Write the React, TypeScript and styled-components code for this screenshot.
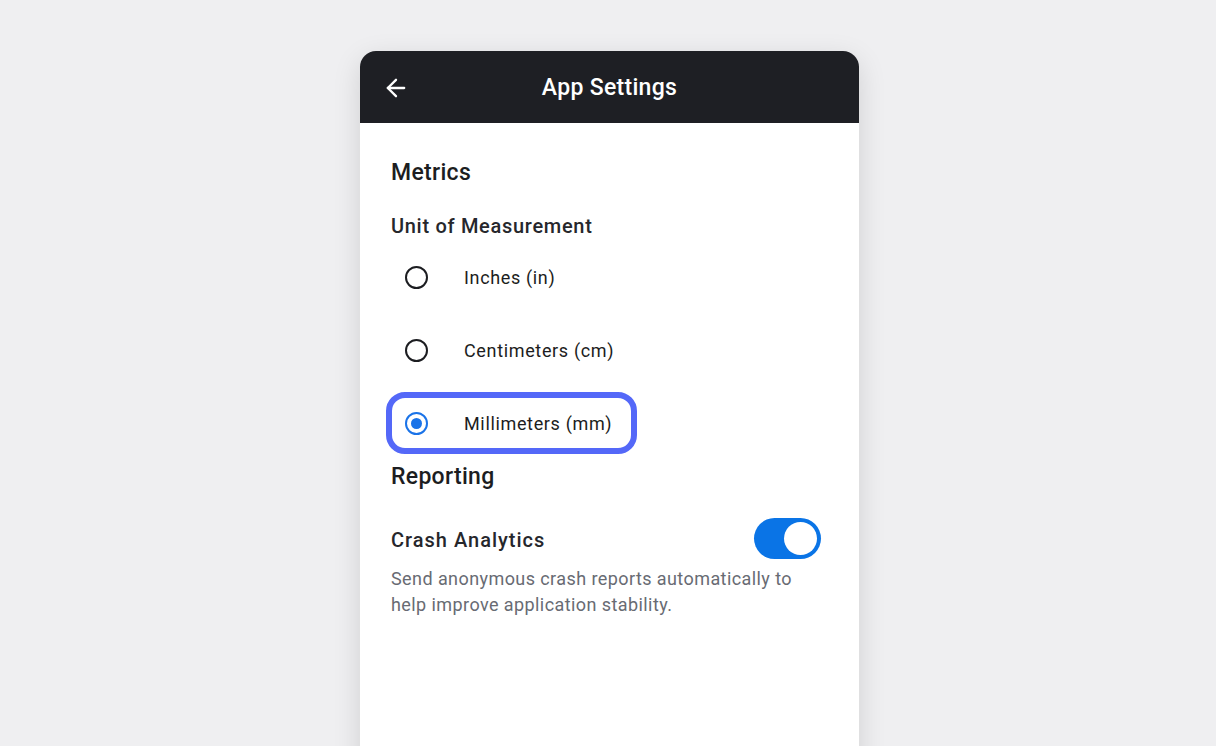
import { useState } from "react"
import styled, { createGlobalStyle } from "styled-components"

const GlobalStyle = createGlobalStyle`
    html, body {
        margin : 0;
        padding : 0;
        background : #efeff1;
        font-family : Roboto, "Noto Sans", "Liberation Sans", sans-serif;
        color : #1c1d21;
    }
`

const units = [
    { id : 'in', label : 'Inches (in)' },
    { id : 'cm', label : 'Centimeters (cm)' },
    { id : 'mm', label : 'Millimeters (mm)' },
]

export default function App(){
    const [unit, setUnit] = useState('mm')
    const [crash, setCrash] = useState(true)
    return(
        <Page>
            <GlobalStyle />
            <Card>
                <Header>
                    <BackButton aria-label="Back">
                        <svg width="28" height="28" viewBox="0 0 24 24" fill="none" stroke="currentColor" strokeWidth="2" strokeLinecap="round" strokeLinejoin="round">
                            <path d="M19 12H5" />
                            <path d="M12 19l-7-7 7-7" />
                        </svg>
                    </BackButton>
                    <Title>App Settings</Title>
                </Header>
                <Content>
                    <SectionTitle>Metrics</SectionTitle>
                    <Label>Unit of Measurement</Label>
                    <RadioList>
                        {
                            units.map(u => (
                                <RadioRow key={u.id} $focused={u.id === 'mm'} onClick={()=>setUnit(u.id)}>
                                    <RadioDot $checked={unit === u.id} />
                                    <RadioText>{u.label}</RadioText>
                                </RadioRow>
                            ))
                        }
                    </RadioList>
                    <SectionTitle $space={9}>Reporting</SectionTitle>
                    <ToggleRow>
                        <Label as="span">Crash Analytics</Label>
                        <Toggle $on={crash} onClick={()=>setCrash(prev=>!prev)} aria-label="Crash Analytics" />
                    </ToggleRow>
                    <Description>
                        Send anonymous crash reports automatically to help improve application stability.
                    </Description>
                </Content>
            </Card>
        </Page>
    )
}

const Page = styled.main`
    height : 746px;
    display : flex;
    justify-content : center;
    padding : 51px 0 0 3px;
    box-sizing : border-box;
    overflow : hidden;
`
const Card = styled.section`
    width : 499px;
    height : 720px;
    background : #ffffff;
    border-radius : 16px 16px 0 0;
    box-shadow : 0 8px 28px rgba(0, 0, 0, 0.13);
    display : flex;
    flex-direction : column;
`
const Header = styled.header`
    position : relative;
    height : 72px;
    background : #1e1f24;
    border-radius : 16px 16px 0 0;
    display : flex;
    align-items : center;
    justify-content : center;
    padding-top : 1px;
    box-sizing : border-box;
`
const BackButton = styled.button`
    position : absolute;
    left : 22px;
    top : 23px;
    width : 28px;
    height : 28px;
    padding : 0;
    border : none;
    background : none;
    color : #ffffff;
    display : flex;
    align-items : center;
    justify-content : center;
`
const Title = styled.h1`
    margin : 0;
    font-size : 23px;
    font-weight : 500;
    color : #ffffff;
    letter-spacing : 0.3px;
`
const Content = styled.div`
    padding : 36px 38px 0 31px;
    display : flex;
    flex-direction : column;
`
const SectionTitle = styled.h2<{ $space? : number }>`
    margin : ${p => p.$space ?? 0}px 0 0;
    font-size : 23px;
    line-height : 28px;
    font-weight : 500;
    letter-spacing : 0.3px;
`
const Label = styled.h3`
    margin : 26px 0 0;
    font-size : 20px;
    line-height : 26px;
    font-weight : 500;
    color : #26272c;
    letter-spacing : 0.7px;
`
const RadioList = styled.div`
    margin : 7px 0 0 -5px;
    display : flex;
    flex-direction : column;
    align-items : flex-start;
    gap : 11px;
`
const RadioRow = styled.label<{ $focused : boolean }>`
    display : inline-flex;
    align-items : center;
    gap : 36px;
    height : 62px;
    box-sizing : border-box;
    padding : 0 19px 0 13px;
    border : 6px solid ${p => p.$focused ? '#5468f8' : 'transparent'};
    border-radius : 19px;
    cursor : pointer;
`
const RadioDot = styled.span<{ $checked : boolean }>`
    width : 23px;
    height : 23px;
    box-sizing : border-box;
    border-radius : 50%;
    border : 2.5px solid ${p => p.$checked ? '#1a73e8' : '#1c1d21'};
    display : flex;
    align-items : center;
    justify-content : center;
    &::after {
        content : "";
        width : 11px;
        height : 11px;
        border-radius : 50%;
        background : ${p => p.$checked ? '#1a73e8' : 'transparent'};
    }
`
const RadioText = styled.span`
    font-size : 18px;
    letter-spacing : 0.65px;
    color : #1c1d21;
`
const ToggleRow = styled.div`
    margin-top : 27px;
    height : 40px;
    display : flex;
    align-items : center;
    justify-content : space-between;
    & > span {
        margin : 4px 0 0;
        letter-spacing : 1px;
    }
`
const Toggle = styled.button<{ $on : boolean }>`
    position : relative;
    width : 67px;
    height : 41px;
    border : none;
    padding : 0;
    border-radius : 21px;
    background : ${p => p.$on ? '#0a74e6' : '#c4c6cc'};
    cursor : pointer;
    &::after {
        content : "";
        position : absolute;
        top : 4px;
        left : ${p => p.$on ? '30px' : '4px'};
        width : 33px;
        height : 33px;
        border-radius : 50%;
        background : #ffffff;
    }
`
const Description = styled.p`
    margin : 8px 0 0;
    font-size : 18px;
    line-height : 26px;
    color : #686b73;
    letter-spacing : 0.42px;
`
